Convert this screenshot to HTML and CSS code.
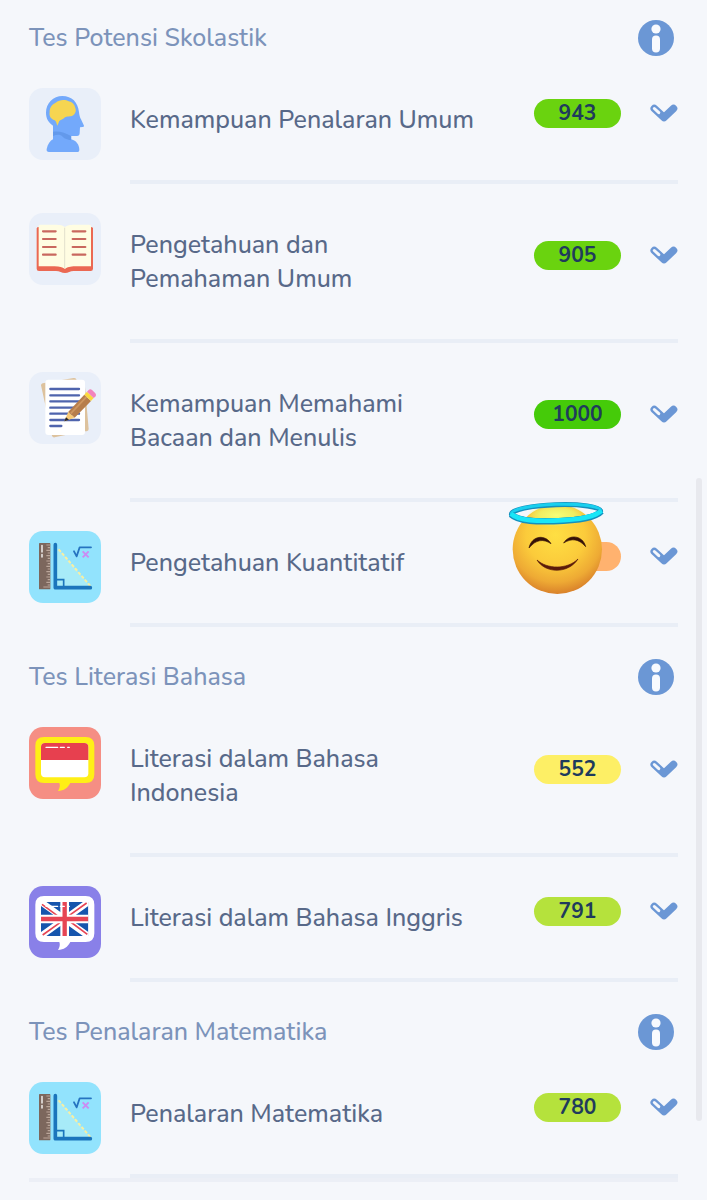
FILE: index.html
```html
<!DOCTYPE html>
<html lang="id">
<head>
<meta charset="utf-8">
<meta name="viewport" content="width=device-width, initial-scale=1">
<title>Hasil Tes</title>
<link rel="stylesheet" href="styles.css">
</head>
<body>
<svg class="sprite" aria-hidden="true">
  <symbol id="info" viewBox="0 0 36 36">
    <circle cx="18" cy="18" r="18" fill="#6b97d5"/>
    <circle cx="18" cy="9" r="4.600" fill="#f8fafe"/>
    <rect x="14" y="15.500" width="8" height="17" rx="4" fill="#f8fafe"/>
  </symbol>
  <symbol id="chevron" viewBox="0 0 28 18">
    <path d="M4.300 4.500 14 13.500 23.500 4.500" fill="none" stroke="#6b97d5" stroke-width="7.600" stroke-linecap="round" stroke-linejoin="round"/>
    <path d="M4.300 4.500 8.800 8.700" fill="none" stroke="#f5f7fb" stroke-width="3" stroke-linecap="round"/>
  </symbol>
  <symbol id="math" viewBox="27 27 216 216">
    <rect x="57" y="63" width="34" height="139" rx="2" fill="#7c675d"/>
    <path d="M79 69h12M83 77h8M79 85h12M83 93h8M79 101h12M83 109h8M79 117h12M83 125h8M79 133h12M83 141h8M79 149h12M83 157h8M79 165h12M83 173h8M79 181h12M83 189h8M70 195h21" stroke="#bba69a" stroke-width="3.500"/>
    <path d="M66 70v20M66 97v8" stroke="#fff" stroke-width="4" stroke-linecap="round"/>
    <path d="M107 71v125h107z" fill="#a7ebf8"/>
    <path d="M116 82 211 192" stroke="#f9efa0" stroke-width="6" stroke-dasharray="10 5"/>
    <path d="M111 173h20v20" fill="none" stroke="#1b75bc" stroke-width="5"/>
    <path d="M106 68v129h105" fill="none" stroke="#1b75bc" stroke-width="11" stroke-linecap="round" stroke-linejoin="round"/>
    <path d="m162 88 8 15 9-27h34" fill="none" stroke="#2674c0" stroke-width="5.500" stroke-linecap="round" stroke-linejoin="round"/>
    <path d="m188 88 18 18m0-18-18 18" stroke="#cb8cf3" stroke-width="6"/>
  </symbol>
</svg>

<main class="page">
  <section class="group">
    <header class="group-head">
      <h2>Tes Potensi Skolastik</h2>
      <button class="info" type="button" aria-label="Info Tes Potensi Skolastik"><svg><use href="#info"/></svg></button>
    </header>
    <ul>
      <li class="item">
        <svg class="icon pale" viewBox="27 24 216 216" aria-hidden="true">
          <path d="M99 137C83 126 78 112 78 98c0-29 22-50 49-50 29 0 47 19 50 48 1 9 3 17 6 22l8 17c2 4 1 6-3 6l-8 1-1 18c0 5-3 8-8 8h-17v10c15 4 24 17 24 31 0 5-2 7-7 7H87c-6 0-8-4-7-9 3-15 11-25 19-29z" fill="#73a9fb"/>
          <path d="M99 155c17-3 37 2 54 13v13c-10-3-19-4-25-11-7-7-17-7-29-2z" fill="#6399eb"/>
          <path d="M112 137c-2-5-3-13-8-16-13-4-17-15-15-24-1-14 7-24 18-29 11-10 30-10 39-4 11 2 18 10 20 20 4 9-1 20-9 23-9 4-20 0-25 8-7 5-14 5-16 13z" fill="#f6d551"/>
        </svg>
        <div class="body">
          <h3>Kemampuan Penalaran Umum</h3>
          <span class="score s-high">943</span>
          <button class="toggle" type="button" aria-label="Detail Kemampuan Penalaran Umum"><svg><use href="#chevron"/></svg></button>
        </div>
      </li>
      <li class="item">
        <svg class="icon pale" viewBox="27 24 216 216" aria-hidden="true">
          <path d="M50 70q0-4 8-4h153q8 0 8 4v121q0 7-7 7h-51c-11 0-16 6-26 6s-16-6-27-6H57q-7 0-7-7z" fill="#eb6852"/>
          <path d="M56 63q0-4 5-4h44c16 0 22 2 30 7 7-5 14-7 29-7h43q6 0 6 4v121h-47c-16 0-24 3-31 8-8-5-16-8-31-8H56z" fill="#fffde2"/>
          <path d="M134 68v122" stroke="#d5d2c1" stroke-width="2"/>
          <path d="M69 79h38M69 102h38M69 126h38M69 149h38M158 79h38M158 102h38M158 126h38M158 149h38" stroke="#c9685e" stroke-width="6.500" stroke-linecap="round"/>
        </svg>
        <div class="body">
          <h3>Pengetahuan dan<br>Pemahaman Umum</h3>
          <span class="score s-high">905</span>
          <button class="toggle" type="button" aria-label="Detail Pengetahuan dan Pemahaman Umum"><svg><use href="#chevron"/></svg></button>
        </div>
      </li>
      <li class="item">
        <svg class="icon pale" viewBox="27 30 216 216" aria-hidden="true">
          <path d="m63 70q0-5 5-6l93-16q7-1 9 6l33 145q1 6-5 7l-94 20q-6 1-8-5z" fill="#ddc29d"/>
          <path d="m91 64 103 0 12 137q0 6-6 7l-109 0z" fill="#ddc29d"/>
          <rect x="76" y="53" width="119" height="166" rx="9" fill="#fff"/>
          <path d="M91 81h86M91 100h86M91 118h86M91 137h86M91 155h86M91 174h86M91 192h33" stroke="#4f64ad" stroke-width="7" stroke-linecap="round"/>
          <path d="m133 178 12-29 19 18z" fill="#f8ca76"/>
          <path d="m133 178 5-12 9 7z" fill="#27242a"/>
          <path d="m145 149 48-51 20 19-49 50z" fill="#b77d4b"/>
          <path d="m152 155 48-51" stroke="#ce9660" stroke-width="5"/>
          <path d="m193 98 8-9 20 19-8 9z" fill="#fbd83e"/>
          <path d="m201 89 5-5q5-5 11 1l9 9q5 5 0 10l-5 4z" fill="#f284bd"/>
        </svg>
        <div class="body">
          <h3>Kemampuan Memahami<br>Bacaan dan Menulis</h3>
          <span class="score s-top">1000</span>
          <button class="toggle" type="button" aria-label="Detail Kemampuan Memahami Bacaan dan Menulis"><svg><use href="#chevron"/></svg></button>
        </div>
      </li>
      <li class="item">
        <svg class="icon sky" aria-hidden="true"><use href="#math"/></svg>
        <div class="body">
          <h3>Pengetahuan Kuantitatif</h3>
          <span class="score s-low">
            <svg class="emoji" viewBox="24 30 291 285" role="img" aria-label="Wajah tersenyum dengan halo">
              <defs>
                <radialGradient id="face" cx="48%" cy="34%" r="66%">
                  <stop offset="0" stop-color="#ffdf43"/>
                  <stop offset=".5" stop-color="#fbcb3b"/>
                  <stop offset=".8" stop-color="#eeaa34"/>
                  <stop offset="1" stop-color="#d9812a"/>
                </radialGradient>
                <radialGradient id="glow">
                  <stop offset="0" stop-color="#f4ff79"/>
                  <stop offset=".6" stop-color="#eef66c" stop-opacity=".8"/>
                  <stop offset="1" stop-color="#eef66c" stop-opacity="0"/>
                </radialGradient>
              </defs>
              <circle cx="172" cy="178" r="134" fill="url(#face)"/>
              <ellipse cx="170" cy="76" rx="88" ry="34" fill="url(#glow)"/>
              <ellipse cx="168" cy="68" rx="134" ry="24" fill="none" stroke="#168fbd" stroke-width="15" transform="rotate(-2 168 68)"/>
              <ellipse cx="168" cy="67" rx="134" ry="24" fill="none" stroke="#19cfee" stroke-width="9" transform="rotate(-2 168 67)"/>
              <path d="M33 73c25 23 84 22 128 21 65-2 123-8 143-30" fill="none" stroke="#168fbd" stroke-width="19"/>
              <path d="M33 71c25 23 84 22 128 21 65-2 123-8 143-30" fill="none" stroke="#19e6f7" stroke-width="14"/>
              <path d="M87 174c8-38 49-42 66-13-23-15-45-13-66 13zM191 159c16-28 58-23 66 11-21-24-42-26-66-11z" fill="#351108" stroke="#351108" stroke-width="2"/>
              <path d="M111 210c30 28 91 29 123-3-29 45-98 44-123 3z" fill="#5a1b0b" stroke="#5a1b0b" stroke-width="2"/>
            </svg>
          </span>
          <button class="toggle" type="button" aria-label="Detail Pengetahuan Kuantitatif"><svg><use href="#chevron"/></svg></button>
        </div>
      </li>
    </ul>
  </section>

  <section class="group">
    <header class="group-head">
      <h2>Tes Literasi Bahasa</h2>
      <button class="info" type="button" aria-label="Info Tes Literasi Bahasa"><svg><use href="#info"/></svg></button>
    </header>
    <ul>
      <li class="item">
        <svg class="icon coral" viewBox="27 27 216 216" aria-hidden="true">
          <path d="M72 57h125q26 0 26 26v86q0 26-26 26h-46c-8 15-19 23-37 24 5-8 7-16 4-24H72q-26 0-26-26V83q0-26 26-26z" fill="#ffef16"/>
          <rect x="63" y="75" width="142" height="103" rx="12" fill="#fff"/>
          <path d="M63 126V87q0-12 12-12h118q12 0 12 12v39z" fill="#e7404f"/>
          <path d="M78 88h35M121 88h12M143 88h5" stroke="#fff" stroke-width="4" stroke-linecap="round"/>
        </svg>
        <div class="body">
          <h3>Literasi dalam Bahasa<br>Indonesia</h3>
          <span class="score s-fair">552</span>
          <button class="toggle" type="button" aria-label="Detail Literasi dalam Bahasa Indonesia"><svg><use href="#chevron"/></svg></button>
        </div>
      </li>
      <li class="item">
        <svg class="icon violet" viewBox="27 27 216 216" aria-hidden="true">
          <clipPath id="flag"><path d="M63 75h142v102H63z"/></clipPath>
          <path d="M72 57h125q26 0 26 26v86q0 26-26 26h-46c-8 15-19 23-37 24 5-8 7-16 4-24H72q-26 0-26-26V83q0-26 26-26z" fill="#fff"/>
          <g clip-path="url(#flag)">
            <path d="M63 75h142v102H63z" fill="#1655ad"/>
            <path d="m63 75 142 102M205 75 63 177" stroke="#fff" stroke-width="19"/>
            <path d="m66 82 54 40M200 78l-53 38M68 174l53-38M202 172l-54-40" stroke="#e64554" stroke-width="5"/>
            <path d="M134 75v102M63 126h142" stroke="#fff" stroke-width="26"/>
            <path d="M134 75v102M63 126h142" stroke="#e64554" stroke-width="13"/>
            <path d="M78 88h35M121 88h12M143 88h5" stroke="#fff" stroke-width="4" stroke-linecap="round"/>
          </g>
        </svg>
        <div class="body">
          <h3>Literasi dalam Bahasa Inggris</h3>
          <span class="score s-good">791</span>
          <button class="toggle" type="button" aria-label="Detail Literasi dalam Bahasa Inggris"><svg><use href="#chevron"/></svg></button>
        </div>
      </li>
    </ul>
  </section>

  <section class="group last">
    <header class="group-head">
      <h2>Tes Penalaran Matematika</h2>
      <button class="info" type="button" aria-label="Info Tes Penalaran Matematika"><svg><use href="#info"/></svg></button>
    </header>
    <ul>
      <li class="item">
        <svg class="icon sky" aria-hidden="true"><use href="#math"/></svg>
        <div class="body">
          <h3>Penalaran Matematika</h3>
          <span class="score s-good">780</span>
          <button class="toggle" type="button" aria-label="Detail Penalaran Matematika"><svg><use href="#chevron"/></svg></button>
        </div>
      </li>
    </ul>
  </section>
  <div class="scrollbar" aria-hidden="true"></div>
</main>
</body>
</html>
```
FILE: styles.css
```css
* { box-sizing: border-box; }
body {
  margin: 0;
  background: #f5f7fb;
  color: #586989;
  font-family: Nunito, "Noto Sans", sans-serif;
}
h2, h3, ul { margin: 0; padding: 0; font-weight: 500; }
ul { list-style: none; display: flex; flex-direction: column; gap: 29px; }
button { border: 0; padding: 0; background: none; cursor: pointer; }
button svg { display: block; width: 100%; height: 100%; }
.sprite { position: absolute; width: 0; height: 0; }

.page { position: relative; padding: 0 29px 18px; }
.group-head {
  display: flex;
  align-items: center;
  justify-content: space-between;
  height: 100px;
}
.group:first-child .group-head { height: 88px; padding-bottom: 12px; }
.group-head h2 { font-size: 25px; line-height: 34px; color: #7c93ba; }
.info { width: 36px; height: 36px; margin-right: 4px; }

.item { display: grid; grid-template-columns: 72px 1fr; gap: 29px; align-items: start; }
.icon { display: block; width: 72px; height: 72px; border-radius: 14px; }
.pale { background: #e9eff9; }
.sky { background: #92e3fd; }
.coral { background: #f58e84; }
.violet { background: #8980e8; }

.body {
  display: flex;
  align-items: center;
  padding: 1px 0 29px;
  border-bottom: 4px solid #e9eef6;
}
.body h3 {
  flex: 1;
  padding: 14px 40px 14px 0;
  font-size: 25px;
  line-height: 34px;
}
.score {
  position: relative;
  width: 87px;
  height: 29px;
  margin: 0 29px 14px 0;
  border-radius: 15px;
  color: #1f3b5c;
  font-size: 21px;
  font-weight: 700;
  line-height: 29px;
  text-align: center;
}
.s-top { background: #45cb09; }
.s-high { background: #6ad30f; }
.s-good { background: #b5e23c; }
.s-fair { background: #fdef65; }
.s-low { background: #ffb26f; }
.toggle { width: 28px; height: 18px; margin-bottom: 14px; }
.emoji { position: absolute; left: -26px; top: -42px; width: 97px; height: 95px; }

.last { border-bottom: 4px solid #eceff6; }
.scrollbar {
  position: absolute;
  top: 478px;
  right: 5px;
  width: 6px;
  height: 643px;
  border-radius: 3px;
  background: #e8e9ee;
}
```
